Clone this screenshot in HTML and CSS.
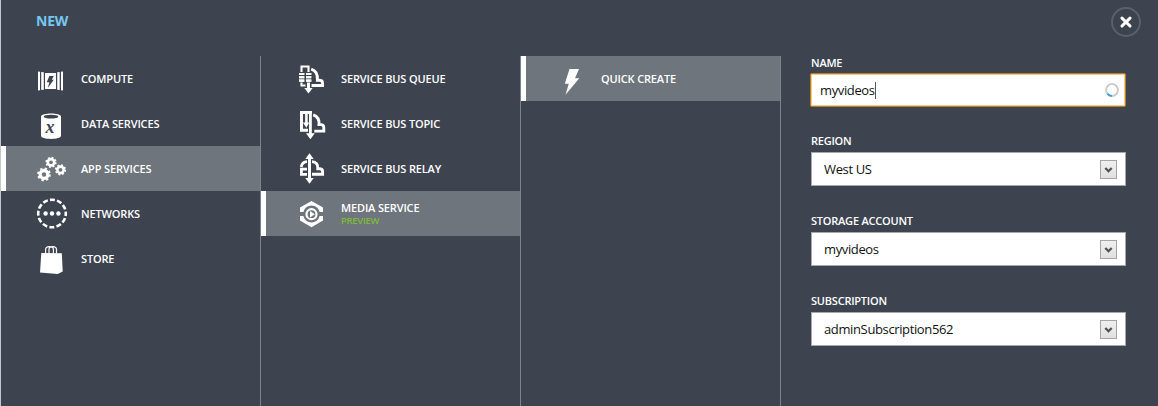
FILE: index.html
```html
<!DOCTYPE html>
<html lang="en">
<head>
<meta charset="utf-8">
<title>New</title>
<link rel="stylesheet" href="styles.css">
</head>
<body>
<main class="drawer">
  <header class="top">
    <h1 class="title">NEW</h1>
    <button class="close" aria-label="Close"><svg width="30" height="30" viewBox="0 0 30 30"><path d="M11 11.2l8 7.8M19 11.2l-8 7.8" stroke="#fff" stroke-width="3.1" stroke-linecap="round"/></svg></button>
  </header>
  <div class="body">
    <ul class="menu">
      <li class="item">
        <svg class="icon" viewBox="33 56 40 45"><path fill="#fff" d="M38 71.5l2 .2v18.6l-2 .2zM41.2 72l2.6.3v17.5l-2.6.3zM45 73h11v16H45zM57.2 72.3l2.5-.3v18l-2.5-.3zM61 71.7l2-.2v19l-2-.2z"/><path fill="#3e444f" d="M49.3 76h4.4l-1.9 3.8h2L47.8 88l1.6-5.8h-2.6z"/></svg>
        <span class="label">COMPUTE</span></li>
      <li class="item">
        <svg class="icon" viewBox="33 101 40 45"><path fill="#fff" d="M41 116.5c0-4 20-4 20 0v19.3c0 4.2-20 4.2-20 0z"/><ellipse cx="51" cy="116.7" rx="7.3" ry="1.9" fill="#3e444f"/><text class="glyph" x="45.5" y="132.7">x</text></svg>
        <span class="label">DATA SERVICES</span></li>
      <li class="item selected">
        <svg class="icon" viewBox="33 146 40 45" fill="none" stroke="#fff"><g stroke-width="2.6"><circle cx="51" cy="162.3" r="3.2"/><circle cx="60.5" cy="169.8" r="3.2"/></g><circle cx="44" cy="174.4" r="3.9" stroke-width="3.3"/><g stroke-width="1.8" stroke-dasharray="1.85 1.85"><circle cx="51" cy="162.3" r="4.71"/><circle cx="60.5" cy="169.8" r="4.71"/></g><circle cx="44" cy="174.4" r="5.86" stroke-width="2" stroke-dasharray="2.3 2.3"/></svg>
        <span class="label">APP SERVICES</span></li>
      <li class="item">
        <svg class="icon" viewBox="33 191 40 45"><circle cx="52" cy="213.5" r="13.8" fill="none" stroke="#fff" stroke-width="2.6" stroke-dasharray="5 2.225" stroke-dashoffset="2.5"/><g fill="#fff"><circle cx="45.6" cy="213.5" r="2.2"/><circle cx="52" cy="213.5" r="2.2"/><circle cx="58.4" cy="213.5" r="2.2"/></g></svg>
        <span class="label">NETWORKS</span></li>
      <li class="item">
        <svg class="icon" viewBox="33 236 40 45"><path fill="#fff" d="M41.3 253l20.5.2.9 18.3-5 2.4L40 272.4z"/><path fill="none" stroke="#fff" stroke-width="1.2" d="M45.6 254v-4.3c0-4 7.8-4 7.8 0v4M49 254v-4.3c0-4 7.5-4 7.5 0v4"/></svg>
        <span class="label">STORE</span></li>
    </ul>
    <ul class="menu">
      <li class="item">
        <svg class="icon" viewBox="293 56 40 45" fill="none" stroke="#fff" stroke-width="3"><path d="M301.5 72v-5.5h7V72M301.5 82.5v3h4M299 74h5.3M306 74h5.3M299 77.3h5.3M306 77.3h5.3M299 80.6h5.3M306 80.6h5.3" class="queue-box"/><path d="M299 74h5.3M306 74h5.3M299 77.3h5.3M306 77.3h5.3M299 80.6h5.3M306 80.6h5.3" stroke-width="2.1"/><path d="M308.5 82.5V89"/><path d="M304.3 88h8.4l-4.2 5.5z" fill="#fff" stroke="none"/><path d="M311.2 69.2c4.5 1.3 6.6 5.2 6.2 11h1.8c2 0 3.3 1 3.3 2.7v2.6H311.5" stroke-width="2.9"/></svg>
        <span class="label">SERVICE BUS QUEUE</span></li>
      <li class="item">
        <svg class="icon" viewBox="293 101 40 45" fill="none" stroke="#fff"><path d="M308 130.3h-6.5V112.5H312" stroke-width="3"/><path d="M306.4 112v11" stroke-width="2.6"/><path d="M310.4 112v22" stroke-width="2.8"/><path d="M302.9 122.5h6.3l-2.8 5.3zM306 133.2h8.8l-4.4 6z" fill="#fff" stroke="none"/><path d="M313.2 114.8c4.3 1.4 6.2 4.9 5.8 9.8h1.6c2.1 0 3.2 1.1 3.2 2.8v3.7h-9.5" stroke-width="2.9"/></svg>
        <span class="label">SERVICE BUS TOPIC</span></li>
      <li class="item">
        <svg class="icon" viewBox="293 146 40 45" fill="none" stroke="#fff"><path d="M309.5 158v21" stroke-width="3"/><path d="M305.3 159l4.2-5.7 4.2 5.7zM305.3 178h8.4l-4.2 5.7z" fill="#fff" stroke="none"/><path d="M307 161.7c-3.2.2-5.2 2-5.8 5.2M307 169.2h-5.6v5.1h5.6" stroke-width="2.8"/><path d="M312 161.6c4.2.2 6.1 2.8 5.8 7.1h1.4c2.2 0 3.4 1 3.4 2.7v2.9H312" stroke-width="2.9"/></svg>
        <span class="label">SERVICE BUS RELAY</span></li>
      <li class="item selected">
        <svg class="icon" viewBox="293 191 40 45"><path fill="#fff" d="M311.5 201l11.5 6.5v4.5h-3.4a8.3 8.3 0 0 0-16.2 0H300v-4.5zM311.5 227.2l11.5-6.7V216h-3.4a8.3 8.3 0 0 1-16.2 0H300v4.5z"/><circle cx="311.5" cy="214.2" r="5" fill="none" stroke="#fff" stroke-width="2.2"/><path fill="#fff" d="M310 211l4.8 3.2-4.8 3.2z"/></svg>
        <span class="label">MEDIA SERVICE</span><span class="tag">PREVIEW</span></li>
    </ul>
    <ul class="menu">
      <li class="item selected">
        <svg class="icon" viewBox="553 56 40 45"><path fill="#fff" d="M569.5 69h9.5l-4 9.2h4.3l-13.8 16.5 3.3-11h-4z"/></svg>
        <span class="label">QUICK CREATE</span></li>
    </ul>
    <form class="form">
      <div class="group name"><label class="caption">NAME</label>
        <div class="field focused"><span>myvideos</span><i class="caret"></i><svg class="spinner" width="14" height="14" viewBox="0 0 14 14" fill="none" stroke-width="2"><circle cx="7" cy="7" r="5.9" stroke="#ccc"/><path d="M7 12.9A5.9 5.9 0 0 1 2.5 10.8" stroke="#3ba2e6"/></svg></div></div>
      <div class="group"><label class="caption">REGION</label>
        <div class="field"><span>West US</span><b class="drop"><svg width="15" height="17" viewBox="0 0 15 17"><path d="M4.3 7l3.2 3.2L10.7 7" fill="none" stroke="#505050" stroke-width="2.2"/></svg></b></div></div>
      <div class="group"><label class="caption">STORAGE ACCOUNT</label>
        <div class="field"><span>myvideos</span><b class="drop"><svg width="15" height="17" viewBox="0 0 15 17"><path d="M4.3 7l3.2 3.2L10.7 7" fill="none" stroke="#505050" stroke-width="2.2"/></svg></b></div></div>
      <div class="group"><label class="caption">SUBSCRIPTION</label>
        <div class="field"><span>adminSubscription562</span><b class="drop"><svg width="15" height="17" viewBox="0 0 15 17"><path d="M4.3 7l3.2 3.2L10.7 7" fill="none" stroke="#505050" stroke-width="2.2"/></svg></b></div></div>
    </form>
  </div>
</main>
</body>
</html>
```
FILE: styles.css
```css
* { box-sizing: border-box; }
body { margin: 0; font-family: "Open Sans", "Noto Sans", sans-serif; }
.drawer { height: 406px; background: #3e444f; border-left: 1px solid #c4c6c9; color: #fff; overflow: hidden; }
.top { height: 56px; display: flex; justify-content: space-between; align-items: flex-start; padding: 7px 17px 0 35px; }
.title { margin: 3px 0 0; font-size: 14px; line-height: 22px; font-weight: 700; color: #74c8f2; letter-spacing: -.25px; }
.close { width: 30px; height: 30px; padding: 0; border: 2px solid #5b616c; border-radius: 50%; background: none; display: flex; align-items: center; justify-content: center; }
.close svg { flex: none; }
.body { display: flex; height: 350px; }
.menu { list-style: none; margin: 0; padding: 0; width: 260px; border-right: 1px solid #7e848b; }
.item { height: 45px; display: grid; grid-template-columns: 40px 1fr; grid-template-rows: 45px; column-gap: 8px; align-items: center; padding-left: 32px; }
.item:has(.tag) { grid-template-rows: 23px 22px; }
.selected { background: #6e757c; box-shadow: inset 5px 0 #fff; }
.icon { width: 40px; height: 45px; grid-row: 1; }
.item:has(.tag) .icon { grid-row: 1 / span 2; }
.queue-box { stroke-dasharray: none; stroke-width: 2.1; }
.glyph { font: italic bold 18px "Liberation Serif", serif; fill: #3e444f; }
.label { font-size: 11px; font-weight: 600; line-height: 15px; white-space: nowrap; letter-spacing: -.15px; }
.item:has(.tag) .label { align-self: end; margin-bottom: -1px; }
.tag { grid-column: 2; align-self: start; font-size: 9.5px; font-weight: 600; line-height: 13px; color: #7fb93c; letter-spacing: -.3px; }
.form { width: 316px; margin: -1px 0 0 29px; }
.group { height: 80px; padding-left: 1px; }
.group.name { height: 78px; padding-left: 0; }
.caption { display: block; height: 19px; font-size: 11px; font-weight: 600; line-height: 15px; white-space: nowrap; letter-spacing: -.22px; }
.name .caption { height: 18px; padding-left: 1px; }
.field { height: 34px; background: #fff; border: 1px solid #a5a8ac; color: #111; font-size: 13px; letter-spacing: -.37px; line-height: 20px; display: flex; align-items: center; padding: 0 8px 0 12px; }
.focused { border: 1px solid #b5812b; box-shadow: inset 0 0 0 1px #f5cb80; border-radius: 2px; padding: 0 6px 0 9px; }
.caret { width: 1px; height: 17px; background: #555; }
.spinner { margin-left: auto; }
.drop { margin-left: auto; width: 17px; height: 19px; border: 1px solid #a5a5a5; background: linear-gradient(#f0f0f0, #e0e0e0); display: flex; }
```
